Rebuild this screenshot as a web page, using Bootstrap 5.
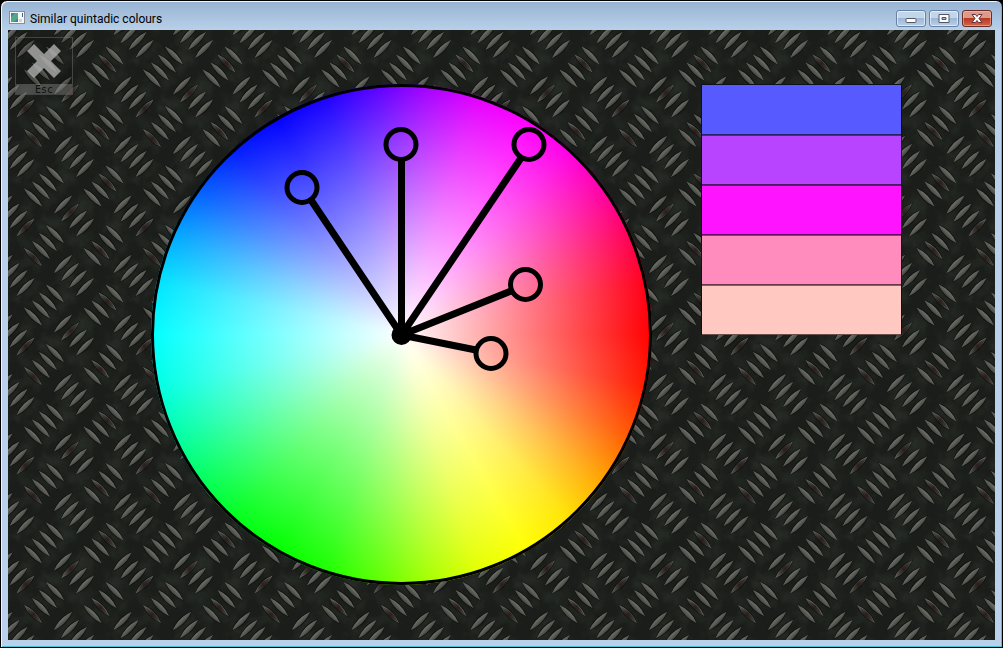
<!DOCTYPE html>
<html lang="en">
<head>
<meta charset="utf-8">
<meta name="viewport" content="width=device-width, initial-scale=1">
<title>Similar quintadic colours</title>
<link rel="stylesheet" href="https://cdn.jsdelivr.net/npm/bootstrap@5.3.0/dist/css/bootstrap.min.css">
<style>
  body { background: #000; font-family: Roboto, "Noto Sans", sans-serif; }

  /* window frame */
  .win {
    border: 1px solid #000;
    border-radius: 7px 7px 0 0;
    background: linear-gradient(#97b3d2, #b9d1ea 30px);
    box-shadow: inset 1px 1px #f0f6fc, inset -1px -1px #48c4d8;
    padding: 0 7px 7px;
  }
  .title-bar { height: 29px; }
  .title-bar h1 { font-size: 12px; line-height: 16px; color: #000; padding-top: 6px; }
  .win-controls { gap: 3px; padding-right: 3px; padding-top: 6px; }
  .win-btn {
    width: 30px; height: 17px; padding: 0;
    border: 1px solid #6681a3; border-radius: 3px;
    box-shadow: inset 0 0 0 1px rgba(255,255,255,.55);
    background: linear-gradient(#c3d5e9 50%, #9db7d5 50%, #b8cfe7);
  }
  .win-btn.win-close {
    border-color: #6d2a24;
    background: linear-gradient(#dd9a8b 50%, #b8391f 50%, #d0664c);
    box-shadow: inset 0 0 0 1px rgba(255,200,190,.5);
  }
  .win-btn svg, .title-bar svg { display: block; margin: 0 auto; }

  /* tread plate tile */
  .plate {
    display: grid;
    grid-template-columns: 65px minmax(0, 78fr) minmax(280px, 501fr) minmax(12px, 49fr) minmax(100px, 201fr) minmax(0, 93fr);
    align-items: start;
    background: #1a1d19 url("data:image/svg+xml,%3Csvg xmlns='http://www.w3.org/2000/svg' width='119' height='119' viewBox='0 0 119 119'%3E%3Cdefs%3E%3Cfilter id='n' x='0' y='0' width='100%25' height='100%25' color-interpolation-filters='sRGB'%3E%3CfeTurbulence type='fractalNoise' baseFrequency='.06' numOctaves='4' seed='4' stitchTiles='stitch'/%3E%3CfeColorMatrix values='0 0 0 0 .18 0 0 0 0 .2 0 0 0 0 .18 1.4 0 0 0 -.55'/%3E%3C/filter%3E%3ClinearGradient id='m' x1='0' y1='0' x2='0' y2='1'%3E%3Cstop offset='0' stop-color='%2370716a'/%3E%3Cstop offset='.5' stop-color='%235b5c55'/%3E%3Cstop offset='1' stop-color='%2342443f'/%3E%3C/linearGradient%3E%3ClinearGradient id='r'%3E%3Cstop offset='0' stop-color='%23120806' stop-opacity='.1'/%3E%3Cstop offset='.5' stop-color='%231e100e' stop-opacity='.8'/%3E%3Cstop offset='1' stop-color='%23120a08' stop-opacity='.3'/%3E%3C/linearGradient%3E%3Cg id='s'%3E%3Cpath d='M-14 0Q0-7 14 0Q0 7-14 0Z' fill='%23060806' fill-opacity='.7'/%3E%3Cpath d='M-13 0Q0-5 13 0Q0 5-13 0Z' fill='url(%23m)'/%3E%3C/g%3E%3Cg id='b'%3E%3Cuse href='%23s' transform='translate(25 -11) rotate(45)'/%3E%3Cuse href='%23s' transform='translate(33 -18) rotate(45)'/%3E%3Cuse href='%23s' transform='translate(40 -26) rotate(45)'/%3E%3Cuse href='%23s' transform='translate(47 -34) rotate(45)'/%3E%3Cuse href='%23s' transform='translate(55 -4) rotate(-45)'/%3E%3Cuse href='%23s' transform='translate(62 4) rotate(-45)'/%3E%3Cuse href='%23s' transform='translate(70 11) rotate(-45)'/%3E%3Cuse href='%23s' transform='translate(77 19) rotate(-45)'/%3E%3C/g%3E%3Cg id='h'%3E%3Cuse href='%23b' x='-119'/%3E%3Cuse href='%23b' x='-59.5'/%3E%3Cuse href='%23b'/%3E%3Cuse href='%23b' x='59.5'/%3E%3C/g%3E%3Cpath id='k' d='M-10 0Q0-5 11 0Q0 5-10 0Z' fill='url(%23r)'/%3E%3C/defs%3E%3Crect width='119' height='119' filter='url(%23n)'/%3E%3Cuse href='%23h'/%3E%3Cuse href='%23h' y='59.5'/%3E%3Cuse href='%23h' y='119'/%3E%3Cuse href='%23h' y='178.5'/%3E%3Cuse href='%23k' transform='translate(25 108) rotate(45)'/%3E%3Cuse href='%23k' transform='translate(92 101) rotate(45)'/%3E%3Cuse href='%23k' transform='translate(99 33) rotate(45)'/%3E%3Cuse href='%23k' transform='translate(62 63) rotate(-45)'/%3E%3Cuse href='%23k' transform='translate(17 79) rotate(-45)'/%3E%3C/svg%3E") 0 0 / 119px 119px;
  }

  .esc-btn {
    width: 58px; height: 58px; margin: 7px 0 0 7px; padding: 0;
    border: 1px solid rgba(150,150,150,.35);
    background: rgba(0,0,0,.12);
  }
  .esc-btn svg { width: 36px; height: 36px; margin: 5px auto 0; }
  .esc-btn span {
    height: 10px; line-height: 12px; background: rgba(170,170,165,.35); color: #111;
    font-family: "DejaVu Sans Mono", monospace; font-size: 10px;
  }

  .wheel {
    grid-column: 3; margin: 54px 0 55px; aspect-ratio: 1; border-radius: 50%;
    background:
      radial-gradient(closest-side, #fff, rgba(255,255,255,0)),
      conic-gradient(from 90deg,
        #f00, #ff1b00, #ff5a00, #ffa500, #ffe400,
        #ff0, #e4ff00, #a5ff00, #5aff00, #1bff00,
        #0f0, #00ff1b, #00ff5a, #00ffa5, #00ffe4,
        #0ff, #00e4ff, #00a5ff, #005aff, #001bff,
        #00f, #1b00ff, #5a00ff, #a500ff, #e400ff,
        #f0f, #ff00e4, #ff00a5, #ff005a, #ff001b,
        #f00);
  }
  .wheel svg { width: 100%; height: 100%; }

  .swatches { grid-column: 5; margin: 54px 0 0; border: 1px solid #101018; border-bottom: 0; }
  .swatches li { height: 50px; border-bottom: 1px solid rgba(0,0,0,.6); }
  .swatches li + li { border-top: 1px solid rgba(0,0,0,.5); }
  .sw-blue { background: #565aff; }
  .sw-violet { background: #b944ff; }
  .sw-magenta { background: #ff14ff; }
  .sw-pink { background: #ff8cbc; }
  .sw-peach { background: #ffc9c1; }
</style>
</head>
<body>
<div class="win d-flex flex-column min-vh-100">
  <header class="title-bar d-flex align-items-center">
    <svg class="flex-shrink-0 ms-0 me-1 mt-1" width="18" height="16" viewBox="0 0 18 16" aria-hidden="true">
      <rect x="1.5" y="1.5" width="15" height="12" fill="#f7f7f5" stroke="#8b8f94"/>
      <rect x="3" y="3" width="7" height="9" fill="#417f98"/>
      <path d="M3 12V7l4-4h3v5l-4 4z" fill="#55a588"/>
      <path d="M14.5 3v4" stroke="#39689c"/><path d="M11 9h3v3h-3z" fill="#d2d5d8"/>
    </svg>
    <h1 class="flex-grow-1 mb-0 fw-normal text-truncate">Similar quintadic colours</h1>
    <div class="win-controls d-flex">
      <button class="win-btn" type="button" aria-label="Minimise">
        <svg width="14" height="13" viewBox="0 0 14 13"><rect x="2" y="6.500" width="10" height="4" rx="1" fill="#fff" stroke="#535666"/></svg>
      </button>
      <button class="win-btn" type="button" aria-label="Maximise">
        <svg width="14" height="13" viewBox="0 0 14 13"><path d="M2 2.500h10v8H2zM5 5.500v2h4v-2z" fill="#fff" fill-rule="evenodd" stroke="#535666"/></svg>
      </button>
      <button class="win-btn win-close" type="button" aria-label="Close">
        <svg width="14" height="13" viewBox="0 0 14 13"><path d="M2 2.500h3.500l1.500 2 1.500-2H12l-3 4 3 4H8.500l-1.500-2-1.500 2H2l3-4z" fill="#fff" stroke="#5b3540"/></svg>
      </button>
    </div>
  </header>

  <main class="plate flex-grow-1">
    <button class="esc-btn d-flex flex-column justify-content-between" type="button">
      <svg viewBox="0 0 36 36" aria-hidden="true"><path d="M8 1L18 11 28 1 35 8 25 18 35 28 28 35 18 25 8 35 1 28 11 18 1 8Z" fill="#b4b4b4" fill-opacity=".78"/></svg>
      <span class="d-block w-100 text-center">Esc</span>
    </button>

    <div class="wheel">
      <svg class="d-block" viewBox="0 0 501 501" role="img" aria-label="Colour wheel with five selected hues">
        <circle cx="250.500" cy="250.500" r="249" fill="none" stroke="#000" stroke-width="3"/>
        <g stroke="#000" stroke-width="7">
          <path d="M250.500 251L160 116M250.500 251V76M250.500 251L370 74M250.500 251L360 207M250.500 251L325 266"/>
        </g>
        <g fill="none" stroke="#000" stroke-width="5">
          <circle cx="151" cy="103.500" r="15"/>
          <circle cx="250" cy="60.500" r="15"/>
          <circle cx="378" cy="60.500" r="15"/>
          <circle cx="374.500" cy="200.500" r="15"/>
          <circle cx="340" cy="269.500" r="15"/>
        </g>
        <circle cx="250.500" cy="251" r="10"/>
      </svg>
    </div>

    <ul class="swatches list-unstyled">
      <li class="sw-blue"></li>
      <li class="sw-violet"></li>
      <li class="sw-magenta"></li>
      <li class="sw-pink"></li>
      <li class="sw-peach"></li>
    </ul>
  </main>
</div>
<script src="https://cdn.jsdelivr.net/npm/bootstrap@5.3.0/dist/js/bootstrap.bundle.min.js"></script>
</body>
</html>
